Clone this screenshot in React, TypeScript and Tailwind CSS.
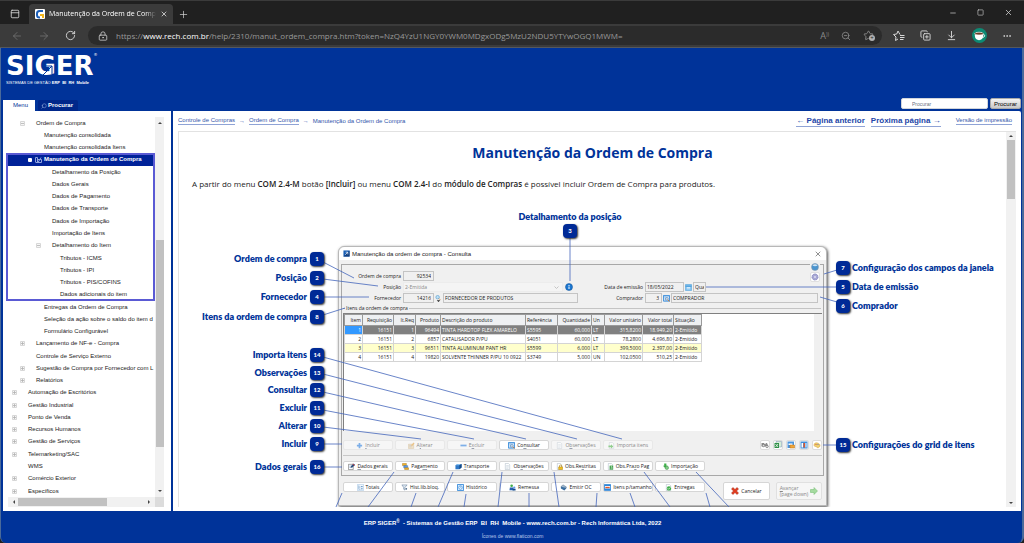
import type { ReactNode } from 'react'
import clsx from 'clsx'
import {
  ArrowDownToLine, ArrowLeft, ArrowRight, CopyPlus, Ellipsis, LockKeyhole, Minus, PanelTop,
  Plus, RotateCw, Search, Square, Star, X, ZoomOut,
} from 'lucide-react'

// ─── Data ────────────────────────────────────────────────────────────────────

type Node = { label: string; level: number; toggle?: '+' | '-'; selected?: boolean }

const TREE_TOP: Node[] = [
  { label: 'Ordem de Compra', level: 1, toggle: '-' },
  { label: 'Manutenção consolidada', level: 2 },
  { label: 'Manutenção consolidada Itens', level: 2 },
]

const TREE_MARKED: Node[] = [
  { label: 'Manutenção da Ordem de Compra', level: 2, selected: true },
  { label: 'Detalhamento da Posição', level: 3 },
  { label: 'Dados Gerais', level: 3 },
  { label: 'Dados de Pagamento', level: 3 },
  { label: 'Dados de Transporte', level: 3 },
  { label: 'Dados de Importação', level: 3 },
  { label: 'Importação de Itens', level: 3 },
  { label: 'Detalhamento do Item', level: 3, toggle: '-' },
  { label: 'Tributos - ICMS', level: 4 },
  { label: 'Tributos - IPI', level: 4 },
  { label: 'Tributos - PIS/COFINS', level: 4 },
  { label: 'Dados adicionais do item', level: 4 },
]

const TREE_BOTTOM: Node[] = [
  { label: 'Entregas da Ordem de Compra', level: 2 },
  { label: 'Seleção da ação sobre o saldo do item d', level: 2 },
  { label: 'Formulário Configurável', level: 2 },
  { label: 'Lançamento de NF-e - Compra', level: 1, toggle: '+' },
  { label: 'Controle de Serviço Externo', level: 1 },
  { label: 'Sugestão de Compra por Fornecedor com L', level: 1, toggle: '+' },
  { label: 'Relatórios', level: 1, toggle: '+' },
  { label: 'Automação de Escritórios', level: 0, toggle: '+' },
  { label: 'Gestão Industrial', level: 0, toggle: '+' },
  { label: 'Ponto de Venda', level: 0, toggle: '+' },
  { label: 'Recursos Humanos', level: 0, toggle: '+' },
  { label: 'Gestão de Serviços', level: 0, toggle: '+' },
  { label: 'Telemarketing/SAC', level: 0, toggle: '+' },
  { label: 'WMS', level: 0 },
  { label: 'Comércio Exterior', level: 0, toggle: '+' },
  { label: 'Específicos', level: 0, toggle: '+' },
]

const INDENT = ['pl-1', 'pl-3', 'pl-5', 'pl-7', 'pl-9']

const COLUMNS = [
  { name: 'Item', width: 'w-[18px]', right: true },
  { name: 'Requisição', width: 'w-[31px]', right: true },
  { name: 'It.Req', width: 'w-[22px]', right: true },
  { name: 'Produto', width: 'w-[25px]', right: true },
  { name: 'Descrição do produto', width: 'w-[85px]' },
  { name: 'Referência', width: 'w-[32px]' },
  { name: 'Quantidade', width: 'w-[34px]', right: true },
  { name: 'Un', width: 'w-[13px]' },
  { name: 'Valor unitário', width: 'w-[38px]', right: true },
  { name: 'Valor total', width: 'w-[31px]', right: true },
  { name: 'Situação', width: 'w-[28px]' },
]

const ROWS = [
  ['1', '16151', '1', '96494', 'TINTA HARDTOP FLEX AMARELO', 'S5595', '60,000', 'LT', '315,8200', '18.949,20', '2-Emitido'],
  ['2', '16151', '2', '6857', 'CATALISADOR P/PU', 'S4051', '60,000', 'LT', '78,2800', '4.696,80', '2-Emitido'],
  ['3', '16151', '3', '96511', 'TINTA ALUMINUM PANT HR', 'S5599', '6,000', 'LT', '399,5000', '2.397,00', '2-Emitido'],
  ['4', '16151', '4', '19820', 'SOLVENTE THINNER P/PU 10 0922', 'S3749', '5,000', 'UN', '102,0500', '510,25', '2-Emitido'],
]

const LEFT_CALLOUTS = [
  { n: 1, label: 'Ordem de compra', at: 'top-[46px]' },
  { n: 2, label: 'Posição', at: 'top-[65px]' },
  { n: 4, label: 'Fornecedor', at: 'top-[84px]' },
  { n: 8, label: 'Itens da ordem de compra', at: 'top-[104px]' },
  { n: 14, label: 'Importa itens', at: 'top-[142px]' },
  { n: 13, label: 'Observações', at: 'top-[160px]' },
  { n: 12, label: 'Consultar', at: 'top-[177px]' },
  { n: 11, label: 'Excluir', at: 'top-[195px]' },
  { n: 10, label: 'Alterar', at: 'top-[213px]' },
  { n: 9, label: 'Incluir', at: 'top-[231px]' },
  { n: 16, label: 'Dados gerais', at: 'top-[254px]' },
]

const RIGHT_CALLOUTS = [
  { n: 7, label: 'Configuração dos campos da janela', at: 'top-[55px]' },
  { n: 5, label: 'Data de emissão', at: 'top-[74px]' },
  { n: 6, label: 'Comprador', at: 'top-[93px]' },
  { n: 15, label: 'Configurações do grid de itens', at: 'top-[232px]' },
]

// x1, y1, x2, y2 of every connector
const CONNECTORS = [
  [121, 56, 152, 72], [121, 73, 176, 80], [121, 91, 167, 91], [121, 109, 143, 102],
  [121, 151, 420, 233], [121, 168, 375, 233], [121, 186, 324, 233], [121, 204, 272, 233],
  [121, 221, 219, 233], [121, 238, 140, 238], [121, 261, 140, 261], [368, 31, 368, 75],
  [504, 81, 635, 81], [622, 68, 635, 64], [618, 91, 635, 96], [621, 239, 636, 239],
  [140, 287, 134, 301], [192, 266, 166, 301], [214, 287, 209, 301], [251, 266, 236, 301],
  [264, 288, 262, 301], [300, 266, 296, 301], [327, 287, 327, 301], [352, 266, 357, 301],
  [395, 287, 394, 301], [428, 287, 433, 301], [442, 266, 468, 301], [494, 266, 527, 301],
  [504, 287, 508, 301],
]

// ─── Icons ───────────────────────────────────────────────────────────────────

type IconName =
  | 'plus' | 'minus' | 'edit' | 'view' | 'page' | 'import' | 'pen' | 'coins' | 'box' | 'lock'
  | 'money' | 'down' | 'tree' | 'filter' | 'history' | 'people' | 'print' | 'table' | 'check'
  | 'cancel' | 'next' | 'binoculars' | 'excel' | 'layout' | 'columns' | 'palette' | 'calendar'
  | 'help' | 'gear' | 'info' | 'app' | 'lens'

const SHEET = <path d="M3 1h7l3 3v11H3z" fill="#fff" stroke="#9aa9b8" />

const ICONS: Record<IconName, ReactNode> = {
  plus: <path d="M6 2h4v4h4v4h-4v4H6v-4H2V6h4z" fill="#2f80e0" />,
  minus: <path d="M1 6h14v4H1z" fill="#2f80e0" />,
  edit: <><path d="M1 5h12v10H1z" fill="#e9d3a8" stroke="#b99b69" /><path d="M3 8h6M3 11h5" stroke="#8894b8" /><path d="M7 10l2-5 4-4 2 2-4 5z" fill="#e6a23c" /></>,
  view: <><path d="M1 1h14v13H1z" fill="#e4f1fd" stroke="#2f86d8" strokeWidth="2" /><path d="M1 4h14M5 4v10" stroke="#2f86d8" /><circle cx="9" cy="9" r="3" fill="#fff" stroke="#3d6fa5" strokeWidth="1.5" /><path d="M11 11l4 4" stroke="#d07a2a" strokeWidth="2" /></>,
  page: <>{SHEET}<path d="M5 6h6M5 9h6M5 12h5" stroke="#a8b8c8" /></>,
  import: <>{SHEET}<path d="M1 8h6V5l5 5-5 5v-3H1z" fill="#4fb34a" /></>,
  pen: <><path d="M1 3h11v12H1z" fill="#fff" stroke="#333" /><path d="M3 7h6M3 10h5" stroke="#4a79b8" /><path d="M6 11l1-4 6-6 3 3-6 6z" fill="#2d4f7c" /><path d="M11 2l4 4" stroke="#d33" strokeWidth="2" /></>,
  coins: <><path d="M1 1h9v5H1z" fill="#f0b429" stroke="#a56b12" /><path d="M4 6h9v5H4z" fill="#5b9be8" stroke="#2b62a8" /><path d="M6 11h9v4H6z" fill="#f0b429" stroke="#a56b12" /></>,
  box: <><path d="M1 5l5-3h9v8l-5 4H1z" fill="#2e78c7" /><path d="M1 5h9l5-3H6z" fill="#8ac0f0" /><path d="M10 5v9l5-4V2z" fill="#174a86" /></>,
  lock: <>{SHEET}<path d="M6 9h9v6H6z" fill="#f2c01e" stroke="#a97a08" /><path d="M8 9V7a2.500 2.500 0 015 0v2" fill="none" stroke="#a97a08" strokeWidth="1.500" /></>,
  money: <>{SHEET}<path d="M6 6h8v9H6z" fill="#2f9a3a" /><path d="M12 8H9v2h3v3H8" stroke="#fff" fill="none" /></>,
  down: <><path d="M5 1h5v5h3l-5 6-6-6h3z" fill="#3fae49" /><circle cx="11" cy="11" r="4" fill="#7fcf86" stroke="#2c7d34" /></>,
  tree: <><path d="M1 1h14v14H1z" fill="#f3f8fd" stroke="#8bb5dc" /><path d="M4 3v9h4M4 7h4" fill="none" stroke="#4c86bd" /><path d="M9 6h4M9 11h4" stroke="#4c86bd" strokeWidth="2" /></>,
  filter: <><path d="M2 2h12l-5 6v6l-3-2V8z" fill="#dbe6f1" stroke="#4b6a8a" /><circle cx="12" cy="11" r="2" fill="#4b6a8a" /></>,
  history: <><path d="M1 1h14v14H1z" fill="#d8ebfd" stroke="#2f86d8" strokeWidth="2" /><circle cx="8" cy="8" r="4" fill="#fff" stroke="#2f86d8" strokeWidth="1.500" /><path d="M8 5v3h2" fill="none" stroke="#2f86d8" /></>,
  people: <><circle cx="6" cy="4" r="3" fill="#3fae49" /><path d="M1 14l1-6h8l1 6z" fill="#2660b0" /><circle cx="12" cy="8" r="2.500" fill="#5b9be8" /><path d="M8 15l1-4h6v4z" fill="#174a86" /></>,
  print: <><path d="M2 6l5-4 8 5-4 5z" fill="#9cb7d0" stroke="#48617a" /><path d="M2 6v4l8 5 5-6" fill="#3b6ea0" /></>,
  table: <><path d="M1 1h14v14H1z" fill="#fff" stroke="#2f86d8" strokeWidth="2" /><path d="M1 3h14M1 12h14" stroke="#2f86d8" strokeWidth="3" /><path d="M3 8h10" stroke="#e2562b" strokeWidth="3" /></>,
  check: <>{SHEET}<circle cx="9" cy="10" r="5" fill="#3fae49" /><path d="M6 10l2 2 4-4" fill="none" stroke="#fff" strokeWidth="1.500" /></>,
  cancel: <path d="M1 4l3-3 4 4 4-4 3 3-4 4 4 4-3 3-4-4-4 4-3-3 4-4z" fill="#e23b1e" stroke="#a32410" />,
  next: <path d="M1 5h7V1l7 7-7 7v-4H1z" fill="#a5dba0" stroke="#6db868" />,
  binoculars: <><path d="M1 4h5l2 3 2-3h2l3 7H9L8 9l-1 2H1z" fill="#8d8d8d" /><circle cx="5" cy="9" r="2.500" fill="#ddd" stroke="#555" /><circle cx="12" cy="11" r="2.500" fill="#ddd" stroke="#555" /></>,
  excel: <><path d="M4 1h11v11H4z" fill="#d6eed8" stroke="#7b93b0" /><path d="M1 4h9v10H1z" fill="#2f8f46" /><path d="M3 6l5 6M8 6l-5 6" stroke="#fff" strokeWidth="1.500" /></>,
  layout: <><path d="M1 1h13v13H1z" fill="#4b95df" /><path d="M3 5h8v3H3z" fill="#fff" /><path d="M6 8h9v6H6z" fill="#f0a63a" stroke="#b86e12" /></>,
  columns: <><path d="M1 1h14v14H1z" fill="#3f8fdc" /><path d="M3 4h3v9H3z" fill="#fff" /><path d="M7 4h3v9H7z" fill="#e2562b" /><path d="M11 4h2v9h-2z" fill="#fff" /></>,
  palette: <><path d="M2 8c0-4 4-5 7-4s6 3 5 6-4 4-6 3 0-2-2-2-4 0-4-3z" fill="#f0d070" stroke="#d0a040" /><circle cx="6" cy="7" r="1" fill="#c33" /><circle cx="10" cy="7" r="1" fill="#36c" /></>,
  calendar: <><path d="M1 1h14v14H1z" fill="#7cc0f0" stroke="#3f93d4" /><path d="M1 5h14" stroke="#3f93d4" strokeWidth="2" /><path d="M4 8h8M4 11h8" stroke="#fff" strokeWidth="1.500" /></>,
  help: <><circle cx="8" cy="8" r="7" fill="#4b95cf" stroke="#8a97a5" /><path d="M3 5a6 6 0 0110 0c-3 2-7 2-10 0z" fill="#cfe5f6" /></>,
  gear: <><circle cx="8" cy="8" r="6" fill="#a8a8d4" stroke="#8a8ac0" strokeWidth="2" strokeDasharray="3 1" /><circle cx="8" cy="8" r="2" fill="#dcdcf0" /></>,
  info: <><circle cx="8" cy="8" r="7" fill="#1c78d2" stroke="#0e4d92" /><path d="M8 4v2M8 7v5" stroke="#fff" strokeWidth="2" /></>,
  app: <><path d="M1 1h14v14H1z" fill="#1b5fb4" /><path d="M1 15L15 1v14z" fill="#123f80" /><path d="M5 11l6-6M6 5h5v5" fill="none" stroke="#fff" strokeWidth="1.500" /></>,
  lens: <><circle cx="6" cy="5" r="4" fill="#bfe0f7" stroke="#5aa0d0" strokeWidth="1.500" /><path d="M9 8l3 3" stroke="#d07a2a" strokeWidth="2" /><path d="M4 12h8l-4 4z" fill="#222" /></>,
}

function Icon({ name, className = 'size-2' }: { name: IconName; className?: string }) {
  return <svg viewBox="0 0 16 16" className={clsx('shrink-0', className)} aria-hidden>{ICONS[name]}</svg>
}

// ─── Browser chrome ──────────────────────────────────────────────────────────

function BrowserBar() {
  return (
    <header className="shrink-0 bg-[#202020] border-t border-[#3b3b3b] font-['Open_Sans',sans-serif] text-[#d8d8d8]">
      <div className="flex items-end h-[23px]">
        <div className="w-[29px] h-5 flex items-center justify-center">
          <PanelTop className="size-[10px]" />
        </div>
        <div className="w-[144px] h-5 bg-[#3b3b3b] rounded-t flex items-center gap-1 px-[6px] text-[7px] text-white">
          <svg viewBox="0 0 10 10" className="size-[10px] shrink-0" aria-hidden>
            <rect width="10" height="10" rx="1" fill="#fff" />
            <path d="M8 2H4.500A2.500 2.500 0 002 4.500V6a2.500 2.500 0 002.500 2.500H5" fill="none" stroke="#1c5fb8" strokeWidth="2" />
            <path d="M5 5h4v4H7V7H5z" fill="#f2b61c" />
          </svg>
          <span className="flex-1 whitespace-nowrap mask-r-from-90%">Manutenção da Ordem de Comp</span>
          <button aria-label="Fechar guia"><X className="size-2" /></button>
        </div>
        <button className="h-5 w-5 flex items-center justify-center" aria-label="Nova guia"><Plus className="size-[11px]" strokeWidth={1.5} /></button>
        <div className="ml-auto h-[23px] flex items-center gap-5 pr-[11px]">
          <button aria-label="Minimizar"><Minus className="size-2" /></button>
          <button aria-label="Maximizar"><Square className="size-[7px]" /></button>
          <button aria-label="Fechar"><X className="size-[9px]" /></button>
        </div>
      </div>
      <div className="flex items-center h-6 bg-[#3b3b3b] border-b border-[#55585c] pl-[11px] pr-3">
        <button className="text-[#777]" aria-label="Voltar"><ArrowLeft className="size-3" strokeWidth={1.5} /></button>
        <button className="ml-[15px] text-[#777]" aria-label="Avançar"><ArrowRight className="size-3" strokeWidth={1.5} /></button>
        <button className="ml-[15px]" aria-label="Atualizar"><RotateCw className="size-[11px]" /></button>
        <div className="ml-3 flex-1 h-[19px] rounded-full bg-[#2b2b2b] flex items-center px-2 text-[8px] text-[#9a9a9a] whitespace-nowrap">
          <LockKeyhole className="size-[10px] mx-[2px] text-[#c8c8c8]" />
          <span className="ml-[6px] flex-1">
            https://<span className="text-white">www.rech.com.br</span>/help/2310/manut_ordem_compra.htm?token=NzQ4YzU1NGY0YWM0MDgxODg5MzU2NDU5YTYwOGQ1MWM=
          </span>
          <span className="flex items-center gap-3 text-[#8a8a8a]">
            <span className="text-[9px]">A<sup className="text-[5px]">))</sup></span>
            <ZoomOut className="size-[10px]" />
            <span className="relative">
              <Star className="size-[11px]" />
              <span className="absolute -right-px bottom-0 size-[6px] rounded-full bg-[#b0b0b0] text-[#222] text-[6px] leading-[6px] text-center">+</span>
            </span>
          </span>
        </div>
        <div className="flex items-center gap-[15px] pl-[11px]">
          <svg viewBox="0 0 24 24" className="size-3" fill="none" stroke="currentColor" strokeWidth="2" aria-hidden>
            <path d="M14 9L10 2 7.500 8 1 9l5 5-1 7 5-3M14 11h9M14 15h9M14 19h7" />
          </svg>
          <CopyPlus className="size-[11px]" />
          <ArrowDownToLine className="size-[11px]" />
          <svg viewBox="0 0 16 16" className="size-[15px]" aria-hidden>
            <circle cx="8" cy="8" r="8" fill="#0d8a74" />
            <path d="M3 6h9v2c0 3-2 5-4.500 5S3 11 3 8z" fill="#fff" />
            <ellipse cx="7.500" cy="6" rx="4.500" ry="1.500" fill="#6b3d28" stroke="#fff" strokeWidth=".7" />
            <path d="M12 7c2-.5 2 3-.5 3" fill="none" stroke="#fff" />
          </svg>
          <Ellipsis className="size-[10px]" />
        </div>
      </div>
    </header>
  )
}

// ─── Site header ─────────────────────────────────────────────────────────────

function SiteHeader() {
  return (
    <div className="shrink-0 h-[63px] flex items-end justify-between pr-px">
      <div className="flex flex-col h-full">
        <div className="pl-[3px] pt-[5px] h-[52px] text-white">
          <div className="relative w-max font-['DejaVu_Sans',sans-serif] font-bold text-[26px] leading-[26px]">
            SIGER
            <svg viewBox="0 0 14 14" className="absolute left-[34px] top-[10px] size-[14px]" aria-hidden>
              <path d="M1 14L12 3M5 3h7v8" fill="none" stroke="#039" strokeWidth="1" />
            </svg>
            <sup className="absolute -right-1 top-0 text-[4px] leading-[4px] font-normal">®</sup>
          </div>
          <div className="text-[4px] leading-[7px] whitespace-pre">
            SISTEMAS DE GESTÃO <b>ERP  BI  RH  Mobile</b>
          </div>
        </div>
        <nav className="flex gap-[3px] mt-auto text-[6px] leading-[11px]">
          <a href="#menu" className="w-8 bg-white text-[#039] pl-[10px]">Menu</a>
          <a href="#procurar" className="w-10 bg-[#00278a] text-white font-bold flex items-center pl-[3px] gap-px rounded-t-xs">
            <Search className="size-[6px] -scale-x-100 text-[#9fb4e0]" />Procurar
          </a>
        </nav>
      </div>
      <form className="flex gap-[2px] pb-[2px]">
        <input aria-label="Procurar" placeholder="Procurar" className="w-[87px] h-[11px] bg-white border border-gray-300 rounded-xs pl-[10px] text-[5px] placeholder:text-gray-500" />
        <button type="button" className="w-[31px] h-[11px] rounded-xs border border-[#aaa] bg-linear-to-b from-[#f4f4f4] to-[#c8c8c8] text-[6px] leading-[8px] text-black">Procurar</button>
      </form>
    </div>
  )
}

// ─── Sidebar ─────────────────────────────────────────────────────────────────

function TreeRow({ node }: { node: Node }) {
  return (
    <li className={clsx('flex-1 min-h-0 flex items-center whitespace-nowrap', INDENT[node.level], node.selected && 'bg-[#002299] text-white font-bold mr-[2px]')}>
      {node.selected ? (
        <span className="w-4 shrink-0 flex items-center gap-[3px]">
          <i className="size-1 bg-white rounded-[1px]" />
          <svg viewBox="0 0 7 6" className="w-[7px] h-[6px]" fill="none" stroke="#8fa2dc" aria-hidden><path d="M.5 5.500v-5h2v5M3 5.500l3-5M3 2.500h3.500v3H1" /></svg>
        </span>
      ) : (
        <span className="w-4 shrink-0 flex">
          {node.toggle && (
            <svg viewBox="0 0 5 5" className="size-[5px] opacity-50" aria-hidden>
              <path d="M.5.5h4v4h-4z" fill="#eee" stroke="#b0b0b0" />
              <path d={node.toggle === '+' ? 'M1 2.500h3M2.500 1v3' : 'M1 2.500h3'} stroke="#666" strokeWidth=".8" />
            </svg>
          )}
        </span>
      )}
      <a href="#topico">{node.label}</a>
    </li>
  )
}

function Sidebar() {
  return (
    <aside className="w-[168px] shrink-0 bg-white pl-[5px] pr-[7px] pt-[6px] pb-1 flex flex-col text-[6px] text-[#222]">
      <div className="flex-1 min-h-0 flex">
        <ul className="flex-1 min-w-0 flex flex-col">
          {TREE_TOP.map(n => <TreeRow key={n.label} node={n} />)}
          <li className="relative flex-12 min-h-0 flex">
            <ul className="flex-1 flex flex-col">
              {TREE_MARKED.map(n => <TreeRow key={n.label} node={n} />)}
            </ul>
            <span className="absolute -left-[2px] right-0 -top-px bottom-0 border-2 border-[#5a5ad4] pointer-events-none" />
          </li>
          {TREE_BOTTOM.map(n => <TreeRow key={n.label} node={n} />)}
        </ul>
        <div className="w-[9px] bg-[#f1f1f1] flex flex-col items-center py-1">
          <Caret dir="up" />
          <i className="block mt-[115px] h-[207px] w-[8px] bg-[#c1c1c1]" />
          <span className="mt-auto"><Caret dir="down" /></span>
        </div>
      </div>
      <div className="h-[10px] flex">
        <div className="flex-1 bg-[#f1f1f1] flex items-center px-1">
          <Caret dir="left" />
          <i className="block ml-[2px] h-2 w-[89px] bg-[#c1c1c1]" />
          <span className="ml-auto"><Caret dir="right" /></span>
        </div>
        <div className="w-[9px] bg-[#dcdcdc]" />
      </div>
    </aside>
  )
}

function Caret({ dir }: { dir: 'up' | 'down' | 'left' | 'right' }) {
  const turn = { up: 'rotate-0', right: 'rotate-90', down: 'rotate-180', left: '-rotate-90' }[dir]
  return <svg viewBox="0 0 4 4" className={clsx('size-1 block', turn)} aria-hidden><path d="M0 3l2-2 2 2z" fill="#444" /></svg>
}

// ─── Dialog ──────────────────────────────────────────────────────────────────

// "&" marks the accelerator letter, as in the original resource strings
function DlgButton({ icon, label, disabled }: { icon: IconName; label: string; disabled?: boolean }) {
  const [before, after] = label.split('&')
  return (
    <button disabled={disabled} className={clsx('w-[50px] h-[10px] border rounded-xs flex items-center justify-center gap-[2px] whitespace-nowrap', disabled ? 'bg-[#f6f6f6] border-[#e8e8e8] text-[#888]' : 'bg-white border-[#d6d6d6]')}>
      <Icon name={icon} className={clsx('size-[7px]', disabled && 'opacity-60')} />
      <span>{before}{after && <><u className="underline-offset-1 decoration-1 decoration-gray-400">{after[0]}</u>{after.slice(1)}</>}</span>
    </button>
  )
}

const FIELD = 'h-[10px] border border-[#c4c4c4] bg-[#f0f0f0] px-[2px]'

function DialogForm() {
  return (
    <div className="relative h-[38px] pt-[6px] flex">
      <div className="w-[236px] flex flex-col gap-px">
        <div className="flex gap-[2px] items-center">
          <label htmlFor="ordem" className="w-[59px] text-right">Ordem de compra</label>
          <input id="ordem" readOnly value="92534" className={clsx(FIELD, 'w-[31px] text-right')} />
        </div>
        <div className="flex gap-[2px] items-center">
          <label htmlFor="posicao" className="w-[59px] text-right">Posição</label>
          <div className="relative">
            <select id="posicao" disabled className="block appearance-none w-[160px] h-[10px] bg-[#f4f4f4] border border-[#ececec] px-px text-[#888] opacity-100">
              <option>2-Emitida</option>
            </select>
            <svg viewBox="0 0 5 3" className="absolute right-1 top-1 w-[5px] h-[3px]" aria-hidden><path d="M.5.5l2 2 2-2" fill="none" stroke="#c4c4c4" /></svg>
          </div>
          <Icon name="info" className="size-[8px]" />
        </div>
        <div className="flex gap-px items-center">
          <label htmlFor="fornecedor" className="w-[59px] mr-px text-right">Fornecedor</label>
          <input id="fornecedor" readOnly value="14216" className={clsx(FIELD, 'w-[31px] text-right')} />
          <Icon name="lens" className="size-[7px]" />
          <input aria-label="Nome do fornecedor" readOnly value="FORNECEDOR DE PRODUTOS" className={clsx(FIELD, 'flex-1 min-w-0 px-px')} />
        </div>
      </div>
      <div className="flex-1 pt-[11px] pr-[5px] flex flex-col gap-px">
        <div className="flex gap-px items-center">
          <label htmlFor="emissao" className="w-[65px] mr-px text-right">Data de emissão</label>
          <input id="emissao" readOnly value="18/05/2022" className={clsx(FIELD, 'w-[39px] px-px')} />
          <Icon name="calendar" className="size-[7px]" />
          <input aria-label="Dia da semana" readOnly value="Qua" className={clsx(FIELD, 'w-[13px] px-px')} />
        </div>
        <div className="flex gap-px items-center">
          <label htmlFor="comprador" className="w-[65px] mr-px text-right">Comprador</label>
          <input id="comprador" readOnly value="3" className={clsx(FIELD, 'w-[17px] text-right')} />
          <Icon name="view" className="size-[7px]" />
          <input aria-label="Nome do comprador" readOnly value="COMPRADOR" className={clsx(FIELD, 'flex-1 min-w-0 px-px')} />
        </div>
      </div>
      <div className="absolute right-[3px] -top-[2px] flex flex-col items-center gap-px bg-[#f0f0f0]">
        <Icon name="help" className="size-[8px]" />
        <button className="size-[10px] bg-white border border-[#e0e0e0] rounded-xs flex items-center justify-center" aria-label="Configuração dos campos"><Icon name="gear" /></button>
      </div>
    </div>
  )
}

function ItemsGrid() {
  return (
    <div className="h-[118px] mx-px flex bg-white border-t border-l border-[#808080]">
      <div className="flex-1">
        <table className="table-fixed w-[357px] border-collapse leading-[8px]">
          <thead>
            <tr className="h-[11px]">
              {COLUMNS.map(c => (
                <th key={c.name} className={clsx(c.width, 'p-0 px-px font-normal bg-[#eef0f2] border border-[#9a9a9a] whitespace-nowrap overflow-hidden', c.right ? 'text-right' : 'text-left')}>{c.name}</th>
              ))}
            </tr>
          </thead>
          <tbody>
            {ROWS.map((row, r) => (
              <tr key={row[0]} className={clsx('h-[9px]', r === 0 && 'bg-[#808080] text-white', r === 2 && 'bg-[#ffffcc]')}>
                {row.map((cell, i) => (
                  <td key={i} className={clsx('p-0 px-px border border-[#d4d4d4] whitespace-nowrap overflow-hidden', COLUMNS[i].right ? 'text-right' : 'text-left', r === 0 && i === 0 && 'bg-[#3399ff]')}>{cell}</td>
                ))}
              </tr>
            ))}
          </tbody>
        </table>
      </div>
      <div className="w-2 bg-[#f0f0f0]" />
    </div>
  )
}

function OrderDialog() {
  const tools: IconName[] = ['binoculars', 'excel', 'layout', 'columns', 'palette']
  return (
    <section className="w-[489px] bg-[#f0f0f0] border border-[#b8b8b8] rounded-t-md shadow-[1px_1px_3px_#555] text-[5px] leading-[8px] text-[#222] font-['Open_Sans',sans-serif]">
      <div className="h-[13px] bg-white rounded-t-md flex items-center px-1 gap-[2px]">
        <Icon name="app" className="size-[7px]" />
        <h2 className="flex-1 font-['Liberation_Sans',sans-serif] text-[6px]">Manutenção da ordem de compra - Consulta</h2>
        <button aria-label="Fechar janela"><X className="size-[8px]" strokeWidth={1.5} /></button>
      </div>
      <div className="pt-1 px-[2px] pb-[5px]">
        <div className="border border-[#a8a8a8] pb-1">
          <DialogForm />
          <div className="h-[10px] flex items-center gap-px pl-px pr-[2px]">
            <i className="w-[2px] h-px bg-[#b8b8b8]" />
            <span>Itens da ordem de compra</span>
            <i className="flex-1 h-px bg-[#c4c4c4]" />
          </div>
          <ItemsGrid />
          <div className="mt-[9px] px-px flex gap-[2px]">
            <DlgButton icon="plus" label="&Incluir" disabled />
            <DlgButton icon="edit" label="A&lterar" disabled />
            <DlgButton icon="minus" label="E&xcluir" disabled />
            <DlgButton icon="view" label="Co&nsultar" />
            <DlgButton icon="page" label="O&bservações" disabled />
            <DlgButton icon="import" label="Importa itens" disabled />
            <div className="ml-auto flex gap-[3px]">
              {tools.map(t => (
                <button key={t} aria-label={t} className="size-[10px] bg-white border border-[#dcdcdc] rounded-xs flex items-center justify-center"><Icon name={t} /></button>
              ))}
            </div>
          </div>
          <div className="mt-[5px] h-px mx-px bg-[#c8c8c8]" />
          <div className="mt-[5px] px-px flex gap-[2px]">
            <DlgButton icon="pen" label="&Dados gerais" />
            <DlgButton icon="coins" label="Paga&mento" />
            <DlgButton icon="box" label="&Transporte" />
            <DlgButton icon="page" label="Ob&servações" />
            <DlgButton icon="lock" label="Obs.Re&stritas" />
            <DlgButton icon="money" label="Obs.Pra&zo Pag" />
            <DlgButton icon="down" label="Impor&tação" />
          </div>
        </div>
        <div className="mt-[6px] px-[2px] flex gap-[2px] items-start">
          <DlgButton icon="tree" label="Totais" />
          <DlgButton icon="filter" label="Hist.lib.bloq." />
          <DlgButton icon="history" label="Histórico" />
          <DlgButton icon="people" label="Remessa" />
          <DlgButton icon="print" label="Emitir OC" />
          <DlgButton icon="table" label="Itens p/tamanho" />
          <DlgButton icon="check" label="Entregas" />
          <button className="ml-auto w-[47px] h-[18px] bg-white border border-[#d6d6d6] rounded-xs flex items-center justify-center gap-[2px]">
            <Icon name="cancel" />Cancelar
          </button>
          <button disabled className="ml-1 w-[46px] h-[18px] bg-[#f6f6f6] border border-[#e0e0e0] rounded-xs flex items-center justify-center gap-[2px] text-[#888] text-left leading-[6px]">
            <span><u>A</u>vançar<br />(page down)</span><Icon name="next" />
          </button>
        </div>
      </div>
    </section>
  )
}

// ─── Annotated figure ────────────────────────────────────────────────────────

function Badge({ n }: { n: number }) {
  return (
    <b className="size-[14px] shrink-0 rounded bg-[#002a96] shadow-[1px_1px_2px_#333] text-white text-[6px] leading-[14px] text-center">{n}</b>
  )
}

function Figure() {
  return (
    <figure className="relative w-[781px] h-[320px] mt-[15px] mx-auto pt-10 pl-[136px] font-['Lato',sans-serif] font-extrabold text-[9px] text-[#003399]">
      <div className="font-normal"><OrderDialog /></div>
      <svg viewBox="0 0 781 320" className="absolute inset-0 size-full pointer-events-none" stroke="#4466bb" strokeWidth=".8" aria-hidden>
        {CONNECTORS.map(([x1, y1, x2, y2], i) => <line key={i} x1={x1} y1={y1} x2={x2} y2={y2} />)}
      </svg>
      <div className="absolute left-[268px] top-[3px] w-[200px] flex flex-col items-center leading-[15px]">
        Detalhamento da posição
        <Badge n={3} />
      </div>
      {LEFT_CALLOUTS.map(c => (
        <div key={c.n} className={clsx('absolute left-0 w-[122px] flex justify-end items-center gap-[3px] leading-[14px] whitespace-nowrap', c.at)}>
          {c.label}<Badge n={c.n} />
        </div>
      ))}
      {RIGHT_CALLOUTS.map(c => (
        <div key={c.n} className={clsx('absolute left-[634px] flex items-center gap-[2px] leading-[14px] whitespace-nowrap', c.at)}>
          <Badge n={c.n} />{c.label}
        </div>
      ))}
    </figure>
  )
}

function Content() {
  return (
    <main className="flex-1 min-w-0 bg-white rounded-tr-xs pl-[5px] pr-[5px] pb-1 flex flex-col">
      <div className="h-5 shrink-0 flex items-center text-[6px] text-[#3355aa]">
        <a href="#compras" className="border-b border-[#8fa3d6] leading-[7px]">Controle de Compras</a>
        <span className="mx-1">→</span>
        <a href="#ordem-compra" className="border-b border-[#8fa3d6] leading-[7px]">Ordem de Compra</a>
        <span className="mx-1">→</span>
        <span>Manutenção da Ordem de Compra</span>
        <div className="ml-auto flex items-center gap-[6px] text-[8px] leading-[10px] font-bold text-[#2446a8]">
          <a href="#anterior" className="border-b border-[#8fa3d6]">← Página anterior</a>
          <a href="#proxima" className="border-b border-[#8fa3d6]">Próxima página →</a>
        </div>
        <a href="#impressao" className="ml-[15px] mr-1 border-b border-[#8fa3d6] leading-[7px]">Versão de impressão</a>
      </div>
      <div className="flex-1 min-h-0 flex border-t border-l border-[#e2e2e2]">
        <article className="flex-1 min-w-0 overflow-hidden font-['Open_Sans',sans-serif]">
          <h1 className="mt-[11px] text-[14px] leading-5 font-bold text-center text-[#003399]">Manutenção da Ordem de Compra</h1>
          <p className="mt-[14px] pl-[13px] text-[8px] leading-[14px] text-[#222]">
            A partir do menu <b className="font-semibold">COM 2.4-M</b> botão <b className="font-semibold">[Incluir]</b> ou menu <b className="font-semibold">COM 2.4-I</b> do <b className="font-semibold">módulo de Compras</b> é possível incluir Ordem de Compra para produtos.
          </p>
          <Figure />
        </article>
        <div className="w-[10px] bg-[#f1f1f1] flex flex-col items-center py-[2px]">
          <Caret dir="up" />
          <i className="block mt-[2px] w-2 h-[59px] bg-[#c1c1c1]" />
          <span className="mt-auto"><Caret dir="down" /></span>
        </div>
      </div>
    </main>
  )
}

export default function App() {
  return (
    <div className="h-screen flex flex-col bg-[#202020] font-['Liberation_Sans',sans-serif]">
      <BrowserBar />
      <div className="flex-1 min-h-0 flex flex-col bg-[#003399] border-l border-r-2 border-[#4a6a9a] rounded-b-md pl-[2px]">
        <SiteHeader />
        <div className="flex-1 min-h-0 flex gap-[2px] pr-px">
          <Sidebar />
          <Content />
        </div>
        <footer className="h-8 shrink-0 pt-2 text-center text-white">
          <p className="text-[6px] leading-[8px] font-bold whitespace-pre">ERP SIGER<sup>®</sup>  - Sistemas de Gestão ERP  BI  RH  Mobile - www.rech.com.br - Rech Informática Ltda, 2022</p>
          <p className="mt-[6px] text-[5px] leading-[6px] text-[#b8c6ea]">Ícones de www.flaticon.com</p>
        </footer>
      </div>
    </div>
  )
}
